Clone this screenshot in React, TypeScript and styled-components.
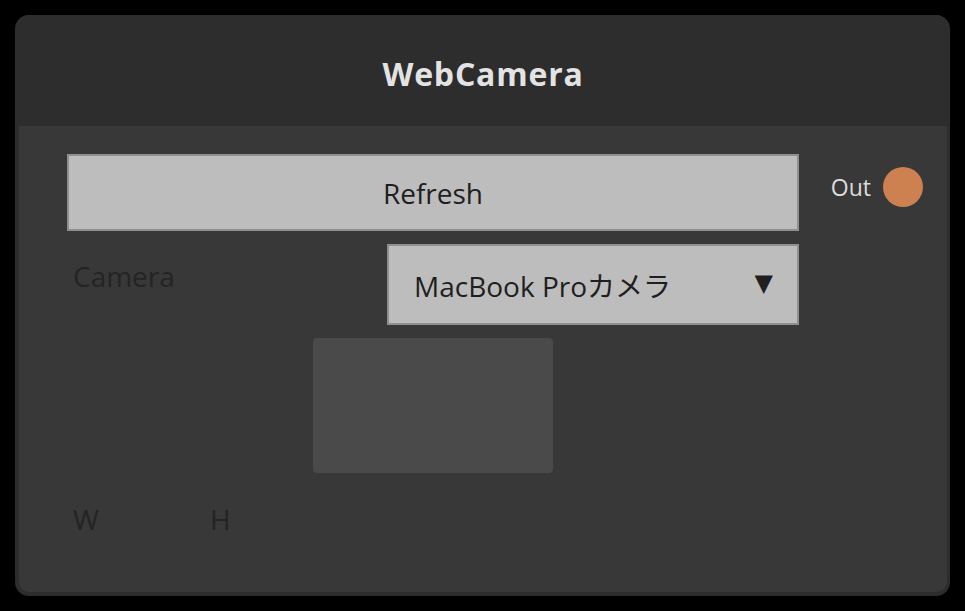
import { FC, ReactElement } from 'react';
import styled, { createGlobalStyle } from 'styled-components';

const GlobalStyle = createGlobalStyle`
    html, body {
        margin: 0;
        padding: 0;
        background: #000000;
        font-family: "Open Sans", "Noto Sans CJK JP", sans-serif;
    }
`;

const App: FC = (): ReactElement => {
    return (
        <>
            <GlobalStyle />
            <Page>
                <Node>
                    <Header>
                        <Title>WebCamera</Title>
                    </Header>
                    <Body>
                        <Controls>
                            <Button>Refresh</Button>
                            <FieldRow>
                                <Label>Camera</Label>
                                <Select>
                                    <span>MacBook Proカメラ</span>
                                    <Arrow>▼</Arrow>
                                </Select>
                            </FieldRow>
                            <Preview />
                            <SizeRow>
                                <Label $width={137}>W</Label>
                                <Label>H</Label>
                            </SizeRow>
                        </Controls>
                        <Ports>
                            <Port>
                                <PortName>Out</PortName>
                                <Socket />
                            </Port>
                        </Ports>
                    </Body>
                </Node>
            </Page>
        </>
    );
};

const Page = styled.div`
    width: 965px;
    height: 611px;
    padding: 15px 0 0 15px;
    box-sizing: border-box;
`;
const Node = styled.div`
    width: 935px;
    height: 581px;
    box-sizing: border-box;
    border: 4px solid #2d2d2d;
    border-top: none;
    border-right-width: 3px;
    border-radius: 14px;
    background: #383838;
    display: flex;
    flex-direction: column;
    overflow: hidden;
`;
const Header = styled.div`
    height: 111px;
    margin: 0 -4px 0 -4px;
    background: #2d2d2d;
    display: flex;
    align-items: center;
    justify-content: center;
    flex-shrink: 0;
`;
const Title = styled.div`
    font-size: 32px;
    font-weight: 700;
    letter-spacing: 0.8px;
    color: #e3e3e3;
    line-height: 1;
    margin-top: 6px;
`;
const Body = styled.div`
    flex: 1;
    display: grid;
    grid-template-columns: 732px 1fr;
    padding: 28px 0 0 48px;
`;
const Controls = styled.div`
    display: flex;
    flex-direction: column;
`;
const Button = styled.div`
    height: 77px;
    box-sizing: border-box;
    border: 2px solid #8f8f8f;
    background: #bdbdbd;
    color: #1f1f1f;
    font-size: 28px;
    line-height: 1;
    display: flex;
    align-items: center;
    justify-content: center;
`;
const FieldRow = styled.div`
    display: flex;
    justify-content: space-between;
    align-items: flex-start;
    margin-top: 13px;
`;
const Label = styled.div<{ $width?: number }>`
    box-sizing: border-box;
    width: ${(p) => (p.$width ? `${p.$width}px` : 'auto')};
    padding-left: 6px;
    padding-top: 18px;
    font-size: 28px;
    line-height: 1;
    color: #242424;
`;
const Select = styled.div`
    width: 412px;
    height: 81px;
    box-sizing: border-box;
    border: 2px solid #8f8f8f;
    background: #bdbdbd;
    color: #1f1f1f;
    font-size: 28px;
    line-height: 1;
    display: flex;
    align-items: center;
    justify-content: space-between;
    padding: 2px 24px 0 25px;
`;
const Arrow = styled.span`
    font-size: 24px;
    font-family: "DejaVu Sans", sans-serif;
    margin-top: -6px;
`;
const Preview = styled.div`
    width: 240px;
    height: 135px;
    margin: 13px auto 0;
    background: #4a4a4a;
    border-radius: 4px;
`;
const SizeRow = styled.div`
    display: flex;
    margin-top: 14px;
    ${Label} {
        padding-top: 18px;
    }
`;
const Ports = styled.div`
    display: flex;
    flex-direction: column;
    align-items: flex-end;
    padding-right: 24px;
    padding-top: 13px;
`;
const Port = styled.div`
    display: flex;
    align-items: center;
    gap: 12px;
`;
const PortName = styled.div`
    font-size: 23px;
    color: #dcdcdc;
`;
const Socket = styled.div`
    width: 40px;
    height: 40px;
    border-radius: 50%;
    background: #cd8050;
`;

export default App;
